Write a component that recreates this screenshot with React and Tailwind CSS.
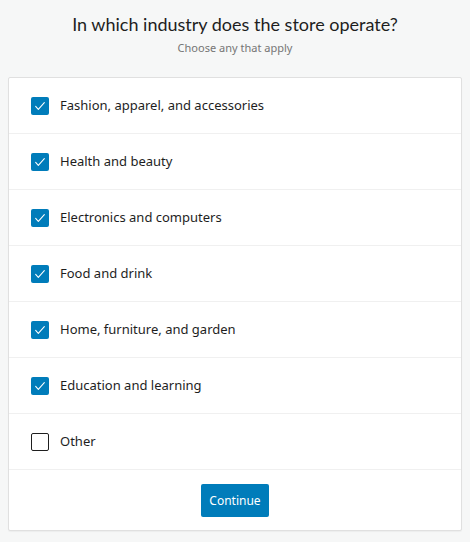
import React, { useState } from "react";

const industries = [
  { id: "fashion", label: "Fashion, apparel, and accessories", checked: true },
  { id: "health", label: "Health and beauty", checked: true },
  { id: "electronics", label: "Electronics and computers", checked: true },
  { id: "food", label: "Food and drink", checked: true },
  { id: "home", label: "Home, furniture, and garden", checked: true },
  { id: "education", label: "Education and learning", checked: true },
  { id: "other", label: "Other", checked: false },
];

function Checkbox({ checked }) {
  return checked ? (
    <span className="flex items-center justify-center w-[18px] h-[18px] rounded-[2px] bg-[#007cba]">
      <svg width="16" height="16" viewBox="0 0 24 24" fill="none">
        <path
          d="M5.5 12.5l4 4.5L18.5 7"
          stroke="white"
          strokeWidth="1.6"
          strokeLinecap="round"
          strokeLinejoin="round"
        />
      </svg>
    </span>
  ) : (
    <span className="block w-[18px] h-[18px] rounded-[2px] border border-[#1e1e1e] bg-white" />
  );
}

export default function App() {
  const [items, setItems] = useState(industries);

  const toggle = (id) =>
    setItems(items.map((i) => (i.id === id ? { ...i, checked: !i.checked } : i)));

  return (
    <div
      className="min-h-screen bg-[#f6f7f7] px-2 pt-[12px] pb-3"
      style={{ fontFamily: '"Noto Sans", "Open Sans", sans-serif' }}
    >
      {/* Title */}
      <div className="text-center mb-[21px]">
        <h1 className="text-[18px] leading-[24px] text-[#1e1e1e] font-['Lato',sans-serif]">
          In which industry does the store operate?
        </h1>
        <p className="text-[11px] leading-[16px] text-[#757575] mt-[4px]">
          Choose any that apply
        </p>
      </div>

      {/* Card */}
      <div className="bg-white border border-[#e0e0e0] rounded-[2px] shadow-[0_1px_1px_rgba(0,0,0,0.04)]">
        {items.map((item) => (
          <label
            key={item.id}
            onClick={() => toggle(item.id)}
            className="flex items-center gap-[11px] h-[56px] pl-[22px] border-b border-[#f0f0f0] cursor-pointer"
          >
            <Checkbox checked={item.checked} />
            <span className="text-[13px] text-[#1e1e1e]">{item.label}</span>
          </label>
        ))}
        <div className="flex justify-center pt-[14px] pb-[13px]">
          <button className="h-[33px] w-[68px] rounded-[2px] bg-[#007cba] text-white text-[12px]">
            Continue
          </button>
        </div>
      </div>
    </div>
  );
}
